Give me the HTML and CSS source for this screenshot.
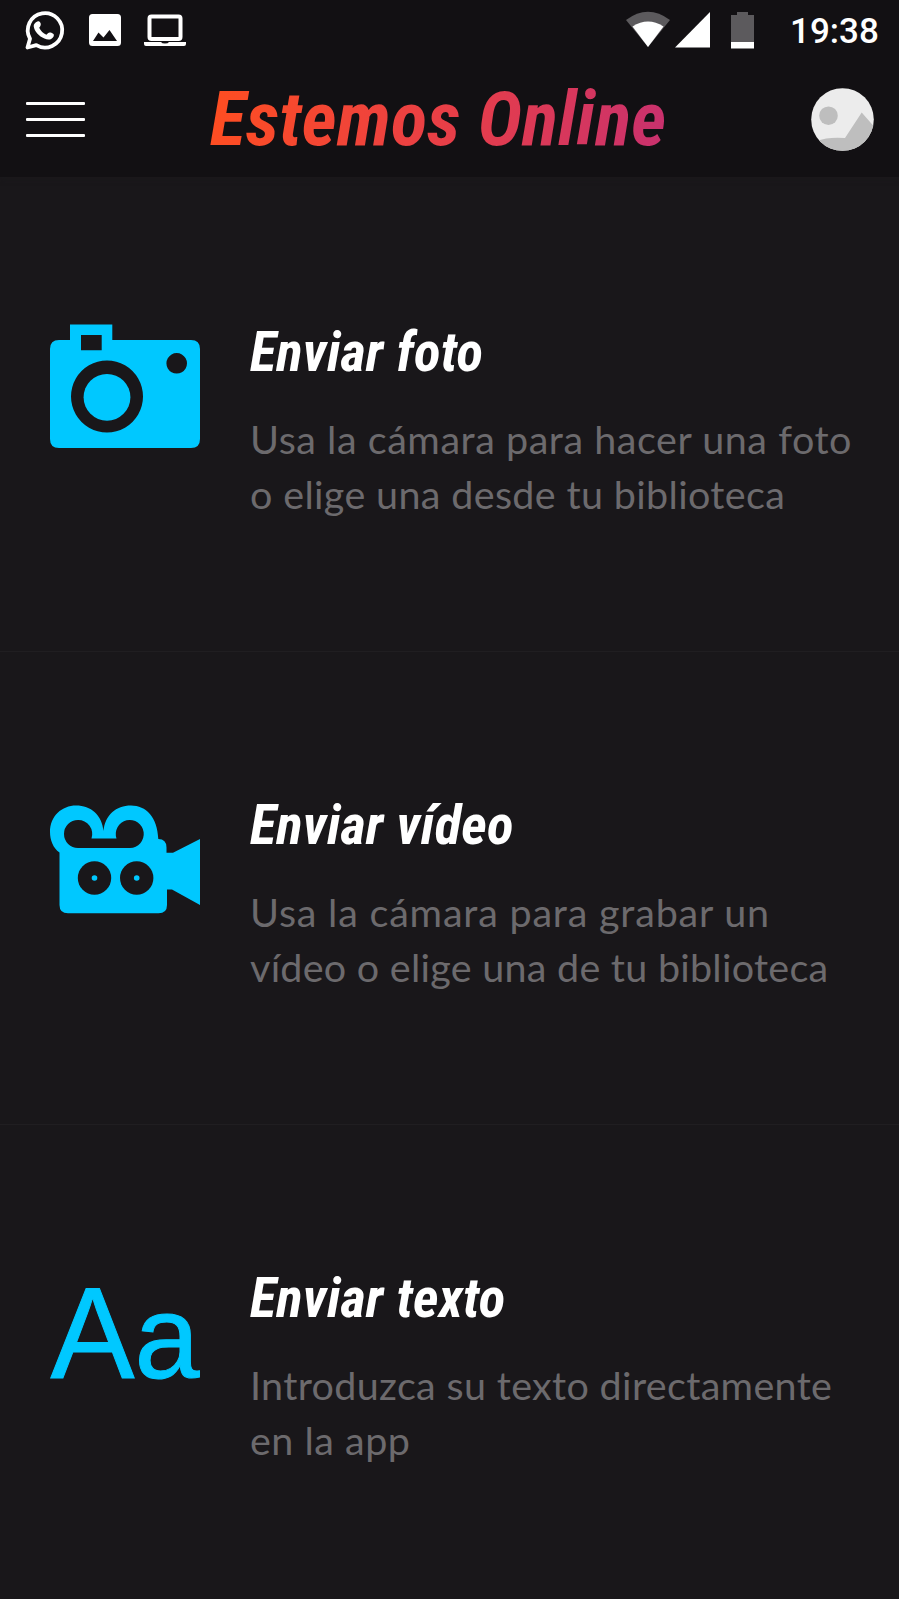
FILE: index.html
```html
<!DOCTYPE html>
<html lang="es">
<head>
<meta charset="utf-8">
<title>Estemos Online</title>
<link rel="stylesheet" href="styles.css">
</head>
<body>
<header class="top">
  <div class="status">
    <svg class="status-left" width="200" height="60" viewBox="0 0 200 60">
      <path d="M27.500 47.500 30 38.800A17.200 17.200 0 1 1 36.300 45.200Z" fill="none" stroke="#fff" stroke-width="3.800" stroke-linejoin="round"/>
      <path d="M37.400 21.400c1.800-.7 2.800.2 3.300 2.200.5 2-.8 3.200-1.500 4.200 1.600 3.300 4 5.500 7.200 6.900 1.300-1 2.200-2.800 4.200-2.100 2.400.9 4 1.600 3 3.800-1.600 3.300-5.200 3.800-9.200 2.200-5.200-2.100-10.200-7.400-10.700-12.300-.2-2.100 1.600-4.300 3.700-4.900Z" fill="#fff"/>
      <path fill-rule="evenodd" d="M92.500 14H117.500Q121 14 121 17.500V42.500Q121 46 117.500 46H92.500Q89 46 89 42.500V17.500Q89 14 92.500 14ZM93 41H117L109.500 30 103.500 37.500 98.500 32.500Z" fill="#fff"/>
      <rect x="149.500" y="16.500" width="31" height="22.500" rx="2" fill="none" stroke="#fff" stroke-width="4"/>
      <path d="M144 42H161Q162 43.500 165 43.500T169 42H186V44Q186 46 184 46H146Q144 46 144 44Z" fill="#fff"/>
    </svg>
    <svg class="status-right" width="150" height="60" viewBox="620 0 150 60">
      <path d="M626 20Q648 3.500 670 20L648 47Z" fill="#5c5a5d"/>
      <path d="M632.500 26.500Q648 16.500 663.500 26.500L648 47Z" fill="#fff"/>
      <path d="M675 47.500 710 12V47.500Z" fill="#fff"/>
      <path d="M731 15H737V12H748V15H754V42H731Z" fill="#5c5a5d"/>
      <path d="M731 42H754V48.500H731Z" fill="#fff"/>
    </svg>
    <span class="clock">19:38</span>
  </div>
  <div class="bar">
    <div class="menu"><i></i><i></i><i></i></div>
    <h1 class="title">Estemos Online</h1>
    <svg class="avatar" width="63" height="63" viewBox="0 0 63 63">
      <defs><clipPath id="disc"><circle cx="31.500" cy="31.500" r="31.300"/></clipPath></defs>
      <g clip-path="url(#disc)">
        <rect width="63" height="63" fill="#ececec"/>
        <circle cx="17.500" cy="27.700" r="9.300" fill="#bebebe"/>
        <path d="M5 53Q18 48.500 34 50L50.700 24.500 66 42V63H5Z" fill="#bebebe"/>
      </g>
    </svg>
  </div>
</header>
<main class="list">
  <section class="row">
    <svg class="icon" width="150" height="150" viewBox="50 311 150 150">
      <path fill-rule="evenodd" fill="#00c8ff" d="M70 324.500H112.300V340H191Q200 340 200 349V439Q200 448 191 448H59Q50 448 50 439V349Q50 340 59 340H70ZM81 335V350.300H101.700V335ZM107 360.500a36 36 0 1 0 .01 0ZM176.700 353a10.300 10.300 0 1 0 .01 0Z"/>
      <circle cx="107" cy="397.300" r="23.400" fill="#00c8ff"/>
    </svg>
    <div class="copy">
      <h2 class="heading">Enviar foto</h2>
      <p class="text"><span class="l1">Usa la cámara para hacer una foto</span><br><span class="l2">o elige una desde tu biblioteca</span></p>
    </div>
  </section>
  <section class="row">
    <svg class="icon" width="150" height="150" viewBox="50 784 150 150">
      <path fill="#00c8ff" d="M59.500 852.500C53 848 50 840 50 832 50 816 62 805.500 76 805.500 91 805.500 102 815 103.500 831 105 815 116 805.500 131 805.500 146 805.500 157.500 817 158.300 839Q166.500 839 166.500 847.500V852.700H173L200 839V905L172 889.500H167V905Q167 913.300 158.500 913.300H68Q59.500 913.300 59.500 905Z"/>
      <path fill="#19171a" d="M78 820A14 14 0 0 1 91.500 838.500H116.500A14 14 0 1 1 130 848H78A14 14 0 1 1 78 820Z"/>
      <circle cx="94.500" cy="878" r="16.700" fill="#19171a"/><circle cx="136.700" cy="878" r="16.700" fill="#19171a"/>
      <circle cx="94.500" cy="878" r="2.800" fill="#00c8ff"/><circle cx="136.700" cy="878" r="2.800" fill="#00c8ff"/>
    </svg>
    <div class="copy">
      <h2 class="heading">Enviar vídeo</h2>
      <p class="text"><span class="l3">Usa la cámara para grabar un</span><br><span class="l4">vídeo o elige una de tu biblioteca</span></p>
    </div>
  </section>
  <section class="row">
    <svg class="icon" width="150" height="150" viewBox="50 1257 150 150">
      <text class="aa" x="50.500" y="1377.500" textLength="84" lengthAdjust="spacingAndGlyphs">A</text>
      <text class="aa aa-small" x="134.500" y="1377.500" textLength="65" lengthAdjust="spacingAndGlyphs">a</text>
    </svg>
    <div class="copy">
      <h2 class="heading">Enviar texto</h2>
      <p class="text"><span class="l5">Introduzca su texto directamente</span><br><span class="l6">en la app</span></p>
    </div>
  </section>
</main>
</body>
</html>
```
FILE: styles.css
```css
* { box-sizing: border-box; }
body { margin: 0; width: 899px; height: 1599px; overflow: hidden; background: #19171a; color: #fff; font-family: Roboto, sans-serif; }
h1, h2, p { margin: 0; }
svg { display: block; flex: none; }
.top { height: 177px; background: #121013; box-shadow: 0 0 6px #1c1a1d; }
.status { height: 60px; display: flex; align-items: center; }
.status-right { margin-left: 420px; }
.clock { margin-left: 20px; font-size: 35px; font-weight: 500; line-height: 60px; padding-top: 4px; white-space: nowrap; }
.bar { height: 117px; display: flex; align-items: flex-start; padding: 0 25px 0 26px; }
.menu { width: 59px; padding-top: 42px; display: flex; flex-direction: column; gap: 13px; }
.menu i { height: 3px; background: #fff; border-radius: 1px; }
.title { margin-left: 123px; padding: 0 8px 0 2px; width: max-content; font: italic 700 75px/88px "Roboto Condensed", Roboto, sans-serif; font-stretch: 75%; letter-spacing: 0.22px; margin-top: 15px; white-space: nowrap; color: transparent; background: linear-gradient(100deg, #ff4e20, #e93f46 50%, #c73070); -webkit-background-clip: text; background-clip: text; }
.avatar { margin-left: auto; margin-top: 28px; }
.list { padding-top: 2px; }
.row { height: 473px; display: flex; padding-left: 50px; border-bottom: 1px solid #201e21; }
.row:last-child { border-bottom: 0; }
.icon { margin-top: 132px; overflow: visible; }
.copy { padding: 140px 0 0 50px; }
.heading { width: max-content; font: italic 700 55px/66px "Roboto Condensed", Roboto, sans-serif; font-stretch: 75%; letter-spacing: 0.18px; white-space: nowrap; }
.text { margin-top: 26px; font: 400 39.500px/55px Lato, sans-serif; color: #6c6a6d; white-space: nowrap; }
.l1 { letter-spacing: 0.54px; }
.l2 { letter-spacing: 0.34px; }
.l3 { letter-spacing: 0.79px; }
.l4 { letter-spacing: 0.25px; }
.l5 { letter-spacing: 0.33px; }
.l6 { letter-spacing: 0.5px; }
.aa { font: 130px "Liberation Sans", Arial, sans-serif; fill: #00c8ff; stroke: #00c8ff; stroke-width: 1; }
.aa-small { font-size: 119px; }
```
